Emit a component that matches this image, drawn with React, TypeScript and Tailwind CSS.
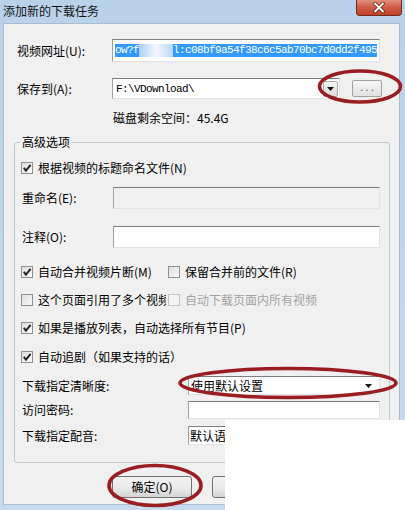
import React from "react";

function Check({ checked, disabled }: { checked?: boolean; disabled?: boolean }) {
  return (
    <span
      className={
        disabled
          ? "relative w-[12px] h-[12px] shrink-0 border border-[#c2c2c2] bg-[#f4f4f4]"
          : "relative w-[12px] h-[12px] shrink-0 border border-[#8e8f8f] bg-gradient-to-br from-[#dedede] to-[#fbfbfb]"
      }
    >
      {checked && (
        <svg className="absolute left-[0px] top-[0px]" width="10" height="10" viewBox="0 0 10 10">
          <path d="M1.8 4.8 L4 7.6 L8.6 1.8" fill="none" stroke="#1f1f1f" strokeWidth="1.9" />
        </svg>
      )}
    </span>
  );
}

function Arrow() {
  return (
    <svg width="7" height="4" viewBox="0 0 7 4">
      <path d="M0 0 L7 0 L3.5 4 Z" fill="#111" />
    </svg>
  );
}

const inputBorder =
  "border border-t-[#7d7d7d] border-l-[#a0a0a0] border-r-[#e3e3e3] border-b-[#e3e3e3]";

export default function App() {
  return (
    <div className="relative w-[405px] h-[510px] overflow-hidden bg-gradient-to-b from-[#b9d1ea] to-[#c8daee] font-['Noto_Sans_CJK_SC','Noto_Sans',sans-serif] text-[12px] leading-[16px] text-black">
      {/* title bar */}
      <div className="h-[23px] flex justify-between pl-[3px] pr-[3px]">
        <span className="mt-[3px] text-[#141414]">添加新的下载任务</span>
        <div className="w-[46px] h-[16px] rounded-b-[4px] border border-t-0 border-[#6d2a22] bg-gradient-to-b from-[#e3907f] via-[#cf5b44] to-[#c2402a] flex items-center justify-center">
          <svg width="12" height="11" viewBox="0 0 12 11">
            <path d="M2 1.5 L10 9.5 M10 1.5 L2 9.5" stroke="#5a1a12" strokeWidth="3.4" strokeLinecap="round" />
            <path d="M2 1.5 L10 9.5 M10 1.5 L2 9.5" stroke="#ffffff" strokeWidth="1.9" strokeLinecap="round" />
          </svg>
        </div>
      </div>

      {/* client */}
      <div className="ml-[3px] w-[397px] h-[482px] bg-[#f0f0f0] border border-[#a9bdd2] flex flex-col">
        {/* URL */}
        <div className="mt-[15px] pl-[13px] h-[23px] flex items-center">
          <span className="w-[95px]">视频网址(U):</span>
          <div className={"w-[268px] h-[23px] bg-white flex items-center pl-[2px] overflow-hidden " + inputBorder}>
            <span className="flex items-center bg-[#3399ff] text-white h-[13px] whitespace-nowrap font-['Liberation_Mono',monospace] text-[11px] leading-[13px] tracking-[-0.6px]">
              <span>ow?f</span>
              <span className="w-[34px] h-[13px] bg-gradient-to-r from-[#a9cff6] via-[#f4f8fd] to-[#b7d6f7]" />
              <span>l:c08bf9a54f38c6c5ab70bc7d0dd2f495</span>
            </span>
          </div>
        </div>

        {/* save */}
        <div className="mt-[16px] pl-[13px] h-[21px] flex items-center">
          <span className="w-[95px]">保存到(A):</span>
          <div className={"w-[228px] h-[21px] bg-white flex items-center justify-between pl-[3px] pr-[1px] " + inputBorder}>
            <span className="font-['Liberation_Mono',monospace] text-[11px] tracking-[-0.6px] whitespace-nowrap">
              {"F:\\VDownload\\"}
            </span>
            <span className="w-[15px] h-[16px] border border-[#a8a8a8] rounded-[2px] bg-gradient-to-b from-[#f6f6f6] to-[#dadada] flex items-center justify-center">
              <Arrow />
            </span>
          </div>
          <div className="ml-[12px] w-[30px] h-[17px] rounded-[2px] border border-[#a0a0a0] bg-gradient-to-b from-[#f6f6f6] to-[#e2e2e2] flex items-end justify-center pb-[2px] text-[#555] text-[9px] leading-[9px] font-['Liberation_Mono',monospace]">
            ...
          </div>
        </div>

        {/* disk */}
        <div className="mt-[11px] pl-[109px] h-[16px] whitespace-nowrap">磁盘剩余空间：45.4G</div>

        {/* group */}
        <fieldset className="mt-[8px] ml-[10px] w-[376px] h-[329px] border border-[#c3c8ce] rounded-[3px] pl-[6px] pr-[9px] shrink-0">
          <legend className="ml-[-1px] px-[2px] leading-[16px]">高级选项</legend>

          <div className="mt-[8px] h-[20px] flex items-center">
            <Check checked />
            <span className="ml-[5px] whitespace-nowrap">根据视频的标题命名文件(N)</span>
          </div>

          <div className="mt-[9px] h-[22px] flex items-center">
            <span className="w-[92px] pl-[1px]">重命名(E):</span>
            <div className={"w-[267px] h-[22px] bg-[#f0f0f0] " + inputBorder} />
          </div>

          <div className="mt-[17px] h-[22px] flex items-center">
            <span className="w-[92px] pl-[1px]">注释(O):</span>
            <div className={"w-[267px] h-[22px] bg-white " + inputBorder} />
          </div>

          <div className="mt-[14px] h-[20px] flex items-center">
            <div className="w-[147px] flex items-center">
              <Check checked />
              <span className="ml-[5px] whitespace-nowrap">自动合并视频片断(M)</span>
            </div>
            <Check />
            <span className="ml-[5px] whitespace-nowrap">保留合并前的文件(R)</span>
          </div>

          <div className="mt-[8px] h-[20px] flex items-center">
            <div className="w-[147px] flex items-center">
              <Check />
              <span className="ml-[5px] w-[128px] overflow-hidden whitespace-nowrap">这个页面引用了多个视频</span>
            </div>
            <Check disabled />
            <span className="ml-[5px] whitespace-nowrap text-[#a3a3a3]">自动下载页面内所有视频</span>
          </div>

          <div className="mt-[8px] h-[20px] flex items-center">
            <Check checked />
            <span className="ml-[5px] whitespace-nowrap">如果是播放列表，自动选择所有节目(P)</span>
          </div>

          <div className="mt-[9px] h-[20px] flex items-center">
            <Check checked />
            <span className="ml-[5px] whitespace-nowrap">自动追剧（如果支持的话）</span>
          </div>

          <div className="mt-[9px] h-[19px] flex items-center">
            <span className="w-[167px] pl-[1px]">下载指定清晰度:</span>
            <div className={"w-[192px] h-[19px] bg-white flex items-center justify-between pl-[2px] pr-[7px] " + inputBorder}>
              <span className="whitespace-nowrap">使用默认设置</span>
              <Arrow />
            </div>
          </div>

          <div className="mt-[6px] h-[18px] flex items-center">
            <span className="w-[167px] pl-[1px]">访问密码:</span>
            <div className={"w-[192px] h-[18px] bg-white " + inputBorder} />
          </div>

          <div className="mt-[7px] h-[19px] flex items-center">
            <span className="w-[167px] pl-[1px]">下载指定配音:</span>
            <div className={"w-[192px] h-[19px] bg-white flex items-center justify-between pl-[1px] pr-[7px] " + inputBorder}>
              <span className="whitespace-nowrap">默认语言</span>
              <Arrow />
            </div>
          </div>
        </fieldset>

        {/* buttons */}
        <div className="mt-[13px] ml-[108px] flex gap-[20px]">
          <div className="w-[80px] h-[22px] rounded-[3px] border border-[#707070] bg-gradient-to-b from-[#f3f3f3] via-[#ebebeb] to-[#d5d5d5] flex items-center justify-center">
            确定(O)
          </div>
          <div className="w-[80px] h-[22px] rounded-[3px] border border-[#707070] bg-gradient-to-b from-[#f3f3f3] via-[#ebebeb] to-[#d5d5d5] flex items-center justify-center">
            取消
          </div>
        </div>
      </div>

      {/* white cover */}
      <div className="absolute left-[225px] top-[420px] right-0 bottom-0 bg-white" />

      {/* annotations */}
      <svg className="absolute left-0 top-0 pointer-events-none" width="405" height="510" viewBox="0 0 405 510">
        <ellipse cx="360" cy="86.5" rx="40.5" ry="15.5" fill="none" stroke="#9a1d22" strokeWidth="3.6" />
        <ellipse cx="288" cy="383" rx="108" ry="14.5" fill="none" stroke="#9a1d22" strokeWidth="3.6" />
        <ellipse cx="155" cy="485.5" rx="46" ry="20" fill="none" stroke="#9a1d22" strokeWidth="3.6" />
      </svg>
    </div>
  );
}
